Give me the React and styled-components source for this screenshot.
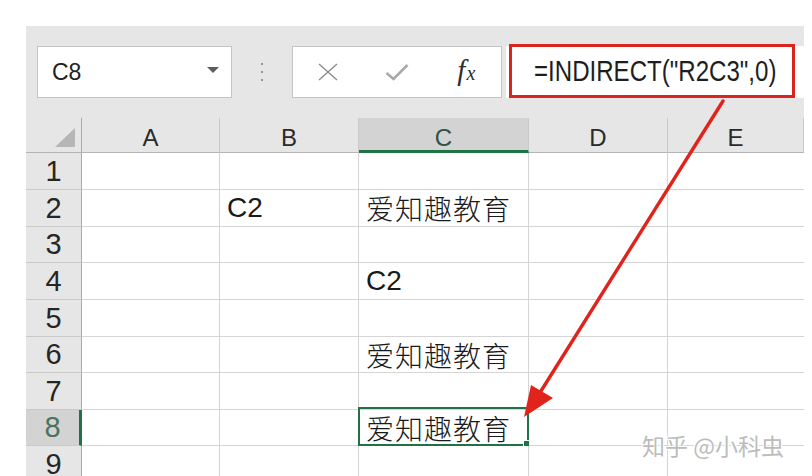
import React from "react";
import styled, { createGlobalStyle } from "styled-components";

const GlobalStyle = createGlobalStyle`
  html, body { margin: 0; padding: 0; background: #fff; overflow: hidden; }
  body { font-family: "Liberation Sans", Arial, sans-serif; }
`;

const Page = styled.div`
  position: relative;
  width: 812px;
  height: 476px;
  box-sizing: border-box;
  padding: 26px 8px 0 26px;
  overflow: hidden;
`;

const Window = styled.div`
  display: flex;
  flex-direction: column;
  width: 778px;
`;

const Toolbar = styled.div`
  height: 92px;
  box-sizing: border-box;
  background: #e6e6e6;
  display: flex;
  align-items: flex-start;
  padding: 20px 0 0 11px;
`;

const NameBox = styled.div`
  width: 195px;
  height: 52px;
  box-sizing: border-box;
  background: #fff;
  border: 1px solid #c4c4c4;
  display: flex;
  align-items: center;
  justify-content: space-between;
  padding: 0 12px 0 14px;
  font-size: 23px;
  color: #222;
`;

const Caret = styled.span`
  width: 0;
  height: 0;
  margin-top: -4px;
  border-left: 6px solid transparent;
  border-right: 6px solid transparent;
  border-top: 6px solid #5c5c5c;
`;

const Dots = styled.div`
  width: 60px;
  height: 52px;
  display: flex;
  flex-direction: column;
  align-items: center;
  justify-content: center;
  gap: 6px;
`;

const Dot = styled.span`
  width: 2px;
  height: 2px;
  border-radius: 50%;
  background: #7a7a7a;
`;

const FuncBox = styled.div`
  width: 210px;
  height: 52px;
  box-sizing: border-box;
  background: #fff;
  border: 1px solid #c4c4c4;
  display: grid;
  grid-template-columns: repeat(3, 1fr);
  align-items: center;
  justify-items: center;
`;

const Fx = styled.span`
  font-family: "Liberation Serif", "Times New Roman", serif;
  font-style: italic;
  font-size: 29px;
  color: #2e2e2e;
  margin-top: -3px;
  & small {
    font-size: 20px;
    margin-left: 1px;
  }
`;

const FormulaBox = styled.div`
  flex: 1;
  margin-left: 4px;
  height: 52px;
  background: #fff;
  display: flex;
  align-items: flex-start;
`;

const RedFrame = styled.div`
  margin: -2px 0 0 3px;
  width: 286px;
  height: 54px;
  box-sizing: border-box;
  border: 3px solid #d9251d;
  display: flex;
  align-items: center;
  padding-left: 22px;
  color: #1e1e1e;
  white-space: nowrap;
`;

const FormulaText = styled.span`
  display: inline-block;
  font-size: 29px;
  transform: scaleX(0.83);
  transform-origin: left center;
`;

const Sheet = styled.div`
  display: grid;
  grid-template-columns: 56px 138px 139px 170px 139px 136px;
  grid-template-rows: 35px 37px 37px 36px 37px 37px 36px 37px 36px 37px;
  background: #fff;
`;

const Corner = styled.div`
  background: #e6e6e6;
  border-right: 1px solid #a9a9a9;
  border-bottom: 1px solid #b5b5b5;
  display: flex;
  align-items: flex-end;
  justify-content: flex-end;
  padding: 0 6px 5px 0;
`;

const CornerTriangle = styled.span`
  width: 20px;
  height: 19px;
  background: #b6b6b6;
  clip-path: polygon(100% 0, 100% 100%, 0 100%);
`;

const ColHead = styled.div`
  background: ${(p) => (p.$active ? "#d3d3d3" : "#e6e6e6")};
  border-right: 1px solid #c9c9c9;
  border-bottom: ${(p) => (p.$active ? "3px solid #217346" : "1px solid #b5b5b5")};
  display: flex;
  align-items: flex-end;
  justify-content: center;
  font-size: 24px;
  line-height: 24px;
  color: ${(p) => (p.$active ? "#2c5443" : "#2a2a2a")};
  padding-bottom: ${(p) => (p.$active ? "0" : "2px")};
`;

const RowHead = styled.div`
  background: ${(p) => (p.$active ? "#d3d3d3" : "#e6e6e6")};
  border-right: ${(p) => (p.$active ? "3px solid #217346" : "1px solid #a9a9a9")};
  border-bottom: 1px solid #cacaca;
  display: flex;
  align-items: center;
  justify-content: center;
  font-size: 29px;
  color: ${(p) => (p.$active ? "#4a7360" : "#262626")};
`;

const Cell = styled.div`
  position: relative;
  background: #fff;
  border-right: ${(p) => (p.$last ? "none" : "1px solid #d5d5d5")};
  border-bottom: 1px solid #d5d5d5;
  display: flex;
  align-items: center;
  padding-left: 7px;
  white-space: nowrap;
  color: #1a1a1a;
  font-family: ${(p) =>
    p.$cjk
      ? '"Noto Sans CJK SC", "Liberation Sans", sans-serif'
      : '"Liberation Sans", Arial, sans-serif'};
  font-weight: ${(p) => (p.$cjk ? 300 : 400)};
  font-size: ${(p) => (p.$cjk ? "28px" : "28px")};
  letter-spacing: ${(p) => (p.$cjk ? "1px" : "0")};
`;

const Selection = styled.span`
  position: absolute;
  top: -3px;
  left: -1px;
  right: -1px;
  bottom: -1px;
  border: 2px solid #1f7244;
  pointer-events: none;
`;

const FillHandle = styled.span`
  position: absolute;
  right: -5px;
  bottom: -5px;
  width: 7px;
  height: 7px;
  background: #1f7244;
  border: 1px solid #fff;
`;

const Watermark = styled.div`
  position: absolute;
  left: 642px;
  top: 428px;
  font-family: "Noto Sans CJK SC", "Liberation Sans", sans-serif;
  font-size: 23px;
  color: #bcbcbc;
  white-space: nowrap;
  text-shadow: 1px 1px 0 #fff, -1px -1px 0 #fff, 1px -1px 0 #fff, -1px 1px 0 #fff;
`;

const Overlay = styled.svg`
  position: absolute;
  left: 0;
  top: 0;
  pointer-events: none;
`;

const columns = ["A", "B", "C", "D", "E"];

const rows = [
  { n: 1, cells: {} },
  { n: 2, cells: { B: "C2", C: "爱知趣教育" } },
  { n: 3, cells: {} },
  { n: 4, cells: { C: "C2" } },
  { n: 5, cells: {} },
  { n: 6, cells: { C: "爱知趣教育" } },
  { n: 7, cells: {} },
  { n: 8, cells: { C: "爱知趣教育" }, active: true },
  { n: 9, cells: {} },
];

const isCjk = (t) => /[\u4e00-\u9fff]/.test(t || "");

export default function App() {
  return (
    <>
      <GlobalStyle />
      <Page>
        <Window>
          <Toolbar>
            <NameBox>
              <span>C8</span>
              <Caret />
            </NameBox>
            <Dots>
              <Dot />
              <Dot />
              <Dot />
            </Dots>
            <FuncBox>
              <svg width="22" height="18" viewBox="0 0 22 18">
                <path d="M2 1 L20 17 M20 1 L2 17" stroke="#8c8c8c" strokeWidth="1.4" fill="none" />
              </svg>
              <svg width="24" height="18" viewBox="0 0 24 18">
                <path d="M1.5 10 L8.5 16 L22.5 2" stroke="#a9a9a9" strokeWidth="2.6" fill="none" />
              </svg>
              <Fx>
                f<small>x</small>
              </Fx>
            </FuncBox>
            <FormulaBox>
              <RedFrame>
                <FormulaText>=INDIRECT("R2C3",0)</FormulaText>
              </RedFrame>
            </FormulaBox>
          </Toolbar>
          <Sheet>
            <Corner>
              <CornerTriangle />
            </Corner>
            {columns.map((c) => (
              <ColHead key={c} $active={c === "C"}>
                {c}
              </ColHead>
            ))}
            {rows.map((r) => (
              <React.Fragment key={r.n}>
                <RowHead $active={r.active}>{r.n}</RowHead>
                {columns.map((c) => {
                  const text = r.cells[c];
                  const selected = r.active && c === "C";
                  return (
                    <Cell key={c} $cjk={isCjk(text)} $last={c === "E"}>
                      {text}
                      {selected && (
                        <Selection>
                          <FillHandle />
                        </Selection>
                      )}
                    </Cell>
                  );
                })}
              </React.Fragment>
            ))}
          </Sheet>
        </Window>
        <Watermark>知乎 @小科虫</Watermark>
        <Overlay width="812" height="476" viewBox="0 0 812 476">
          <line x1="723" y1="101" x2="541" y2="391" stroke="#e0231b" strokeWidth="3.4" strokeLinecap="round" />
          <polygon points="524,417 531,385 553,398" fill="#e0231b" />
        </Overlay>
      </Page>
    </>
  );
}
